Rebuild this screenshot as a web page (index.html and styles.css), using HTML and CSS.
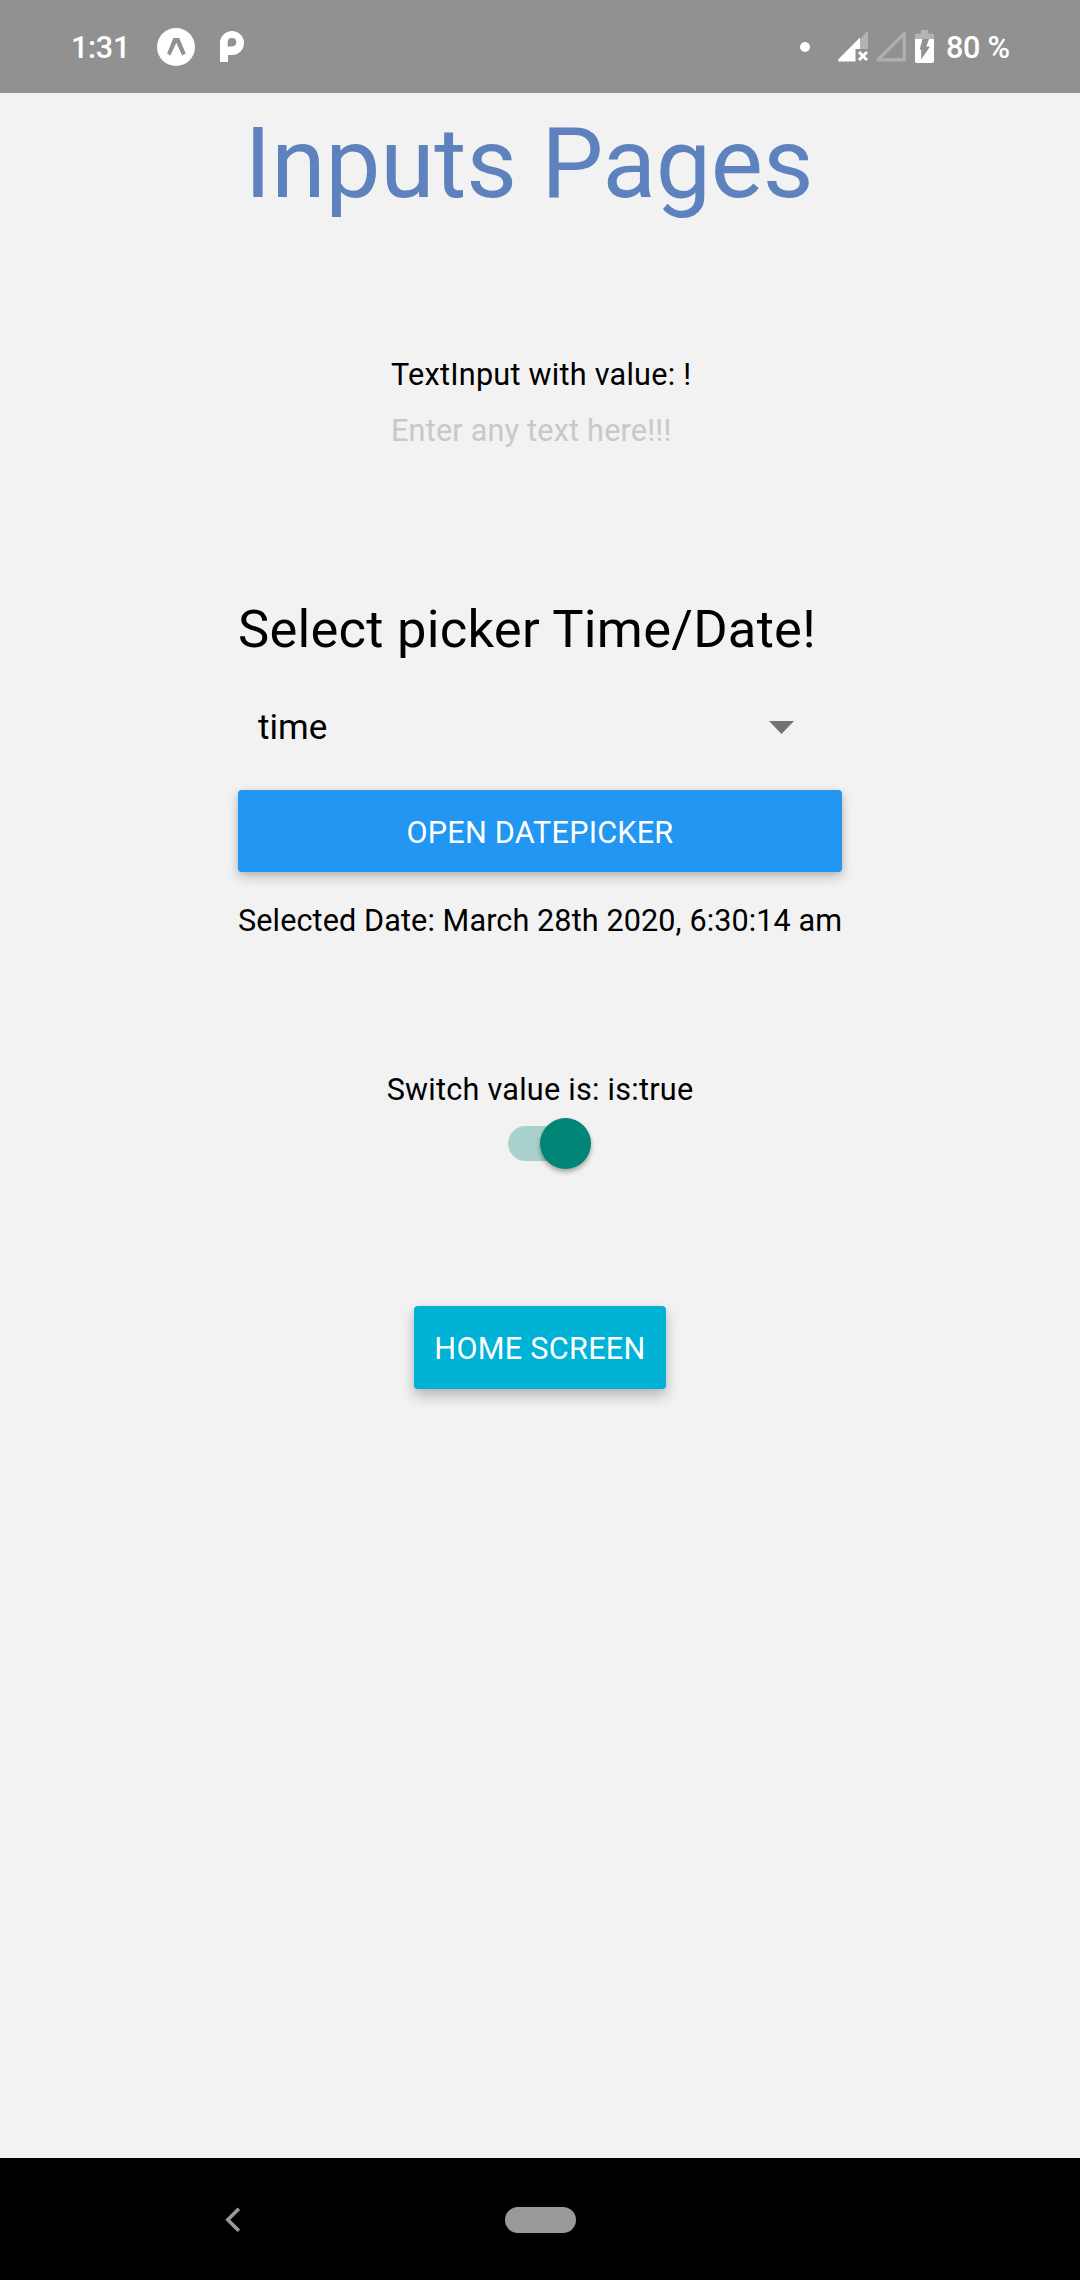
FILE: index.html
```html
<!DOCTYPE html>
<html lang="en">
<head>
<meta charset="utf-8">
<title>Inputs Pages</title>
<link rel="stylesheet" href="styles.css">
</head>
<body>
<div class="screen">
  <header class="status-bar">
    <span class="clock">1:31</span>
    <svg class="icon-expo" width="38" height="38" viewBox="0 0 38 38">
      <circle cx="19" cy="19" r="19" fill="#fff"/>
      <path d="M16.400 10h5.800l6.500 15.500-3.500 2-5.900-12.700-5.900 12.700-3.300-2z" fill="#919191"/>
    </svg>
    <svg class="icon-p" width="24" height="31" viewBox="0 0 24 31">
      <path fill="#fff" fill-rule="evenodd" d="M0 31V12A12 12 0 1 1 12 24H8V31ZM7.700 15.500H12.200A4.300 4.300 0 1 0 7.700 11.200Z"/>
    </svg>
    <span class="spacer"></span>
    <span class="dot"></span>
    <svg class="icon-signal" width="30" height="31" viewBox="0 0 30 31">
      <path d="M22 8.500 28 1.300Q30-.3 30 1.800V18H22z" fill="#b3b3b3"/>
      <path d="M22 6.500V18H17.500V30.500H1.600Q-.8 30.300 .6 28.100z" fill="#fff"/>
      <path d="M21 21l8 8m0-8l-8 8" stroke="#fff" stroke-width="3"/>
    </svg>
    <svg class="icon-signal-empty" width="30" height="31" viewBox="0 0 30 31">
      <path d="M28.300 2.300V28.800H1.800z" fill="none" stroke="#b0b0b0" stroke-width="3.300" stroke-linejoin="round"/>
    </svg>
    <svg class="icon-battery" width="19" height="33" viewBox="0 0 19 33">
      <path d="M6 0H13V3.500H17.500Q19 3.500 19 5V9H0V5Q0 3.500 1.500 3.500H6z" fill="#b3b3b3"/>
      <path d="M0 9H19V31Q19 33 17 33H2Q0 33 0 31z" fill="#fff"/>
      <path d="M7.500 9H14L11.300 16.500H15L6.200 29.500V19.500H4.700z" fill="#919191"/>
    </svg>
    <span class="battery-level">80 %</span>
  </header>

  <main class="content">
    <h1 class="title">Inputs Pages</h1>

    <section class="text-block">
      <label class="label" for="any-text">TextInput with value: !</label>
      <input class="text-input" id="any-text" type="text" placeholder="Enter any text here!!!">
    </section>

    <section class="date-block">
      <h2 class="heading">Select picker Time/Date!</h2>
      <div class="picker">
        <span class="picker-value">time</span>
        <svg width="25" height="13" viewBox="0 0 25 13"><path d="M0 0H25L12.500 13z" fill="#727272"/></svg>
      </div>
      <button class="button button-date">OPEN DATEPICKER</button>
      <p class="label selected-date">Selected Date: March 28th 2020, 6:30:14 am</p>
    </section>

    <section class="switch-block">
      <p class="label">Switch value is: is:true</p>
      <div class="switch"><span class="thumb"></span></div>
    </section>

    <button class="button button-home">HOME SCREEN</button>
  </main>

  <nav class="nav-bar">
    <svg class="nav-back" width="16" height="26" viewBox="0 0 16 26"><path d="M13.800 1.800 2.800 12.800 13.800 23.800" fill="none" stroke="#999" stroke-width="3.600"/></svg>
    <span class="nav-home"></span>
  </nav>
</div>
</body>
</html>
```
FILE: styles.css
```css
* { box-sizing: border-box; }

body {
  margin: 0;
  background: #f2f2f2;
  color: #000;
  font: 30.6px/36px Roboto, "Noto Sans", sans-serif;
}

h1, h2, p { margin: 0; font-weight: 400; }

.screen {
  display: flex;
  flex-direction: column;
  height: 2280px;
}

/* Status bar */
.status-bar {
  display: flex;
  align-items: center;
  height: 93px;
  padding: 0 71px;
  background: #919191;
  color: #fff;
  font-weight: 500;
  letter-spacing: -.3px;
}
.status-bar svg { flex: none; }
.clock { width: 86px; padding-top: 2px; }
.icon-expo { margin-right: 25px; }
.spacer { flex: 1; }
.dot {
  width: 10px;
  height: 10px;
  margin-right: 28px;
  border-radius: 50%;
  background: #fff;
}
.icon-signal { margin-right: 8px; }
.icon-signal-empty { margin-right: 9px; }
.icon-battery { margin-right: 12px; }
.battery-level { width: 63px; padding-top: 2px; white-space: nowrap; }

/* Content */
.content {
  display: flex;
  flex: 1;
  flex-direction: column;
  align-items: center;
  padding-top: 13px;
}
.title {
  padding-right: 22px;
  color: #5d82bd;
  font-size: 98.4px;
  line-height: 116px;
  letter-spacing: -.2px;
}
.label { letter-spacing: .25px; white-space: nowrap; }

.text-block {
  display: flex;
  flex-direction: column;
  gap: 20px;
  width: 298px;
  margin-top: 135px;
}
.text-input {
  width: 100%;
  height: 36px;
  padding: 0;
  border: 0;
  background: none;
  font: inherit;
  letter-spacing: .2px;
}
.text-input::placeholder { color: #c8c8c8; opacity: 1; }

.date-block {
  display: flex;
  flex-direction: column;
  width: 604px;
  margin-top: 149px;
}
.heading {
  font-size: 52.5px;
  line-height: 62px;
  letter-spacing: .25px;
  white-space: nowrap;
}
.picker {
  display: flex;
  align-items: center;
  justify-content: space-between;
  height: 110px;
  margin: 12px 0 8px;
  padding: 0 48px 0 20px;
  font-size: 35px;
}
.picker-value { padding-top: 2px; }

.button {
  padding: 3px 0 0;
  border: 0;
  border-radius: 4px;
  color: #fff;
  font: inherit;
  letter-spacing: .22px;
  box-shadow: 0 5px 12px rgba(0, 0, 0, .22), 0 1px 5px rgba(0, 0, 0, .08);
}
.button-date { height: 82px; background: #2196f3; }
.button-home {
  width: 252px;
  height: 83px;
  margin-top: 137px;
  background: #00b2d6;
  letter-spacing: .3px;
  box-shadow: 0 7px 14px rgba(0, 0, 0, .24), 0 1px 5px rgba(0, 0, 0, .06);
}
.selected-date { margin-top: 31px; letter-spacing: .1px; }

.switch-block {
  display: flex;
  flex-direction: column;
  align-items: center;
  margin-top: 133px;
}
.switch {
  display: flex;
  align-items: center;
  justify-content: flex-end;
  width: 83px;
  height: 35px;
  margin: 18px 0 8px 19px;
  border-radius: 18px;
  background: #a9d2cd;
}
.thumb {
  flex: none;
  width: 51px;
  height: 51px;
  border-radius: 50%;
  background: #008577;
  box-shadow: 0 3px 5px rgba(0, 0, 0, .32);
}

/* Navigation bar */
.nav-bar {
  display: flex;
  align-items: center;
  height: 122px;
  padding: 2px 0 0 225px;
  background: #000;
}
.nav-home {
  width: 71px;
  height: 26px;
  margin-left: 264px;
  border-radius: 13px;
  background: #999;
}
```
